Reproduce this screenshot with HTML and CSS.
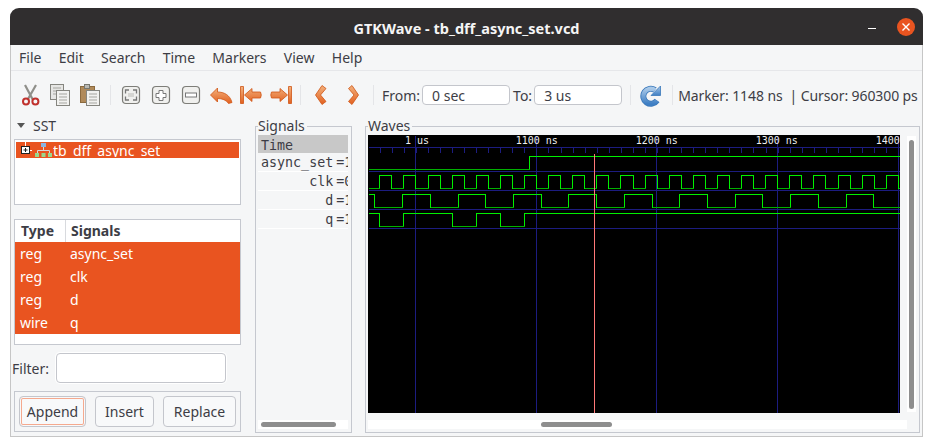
FILE: index.html
```html
<!DOCTYPE html>
<html lang="en">
<head>
<meta charset="UTF-8">
<meta name="viewport" content="width=device-width, initial-scale=1.0">
<title>GTKWave - tb_dff_async_set.vcd</title>
<link rel="stylesheet" href="styles.css">
</head>
<body>
<div class="window">
  <div class="titlebar">
    <span></span>
    <span class="title">GTKWave - tb_dff_async_set.vcd</span>
    <div class="controls">
      <span class="minimize"></span>
      <svg class="close" width="18" height="18" viewBox="0 0 18 18"><circle cx="9" cy="9" r="9" fill="#e95420"/><path d="M5.5 5.5l7 7M12.5 5.5l-7 7" stroke="#fff" stroke-width="1.4"/></svg>
    </div>
  </div>

  <div class="menubar">
    <span>File</span><span>Edit</span><span>Search</span><span>Time</span><span>Markers</span><span>View</span><span>Help</span>
  </div>

  <div class="toolbar">
    <svg class="tool" viewBox="0 0 30 24">
      <path d="M9 2l8 15M20 2l-8 14" stroke="#8f8f8a" stroke-width="2.2" fill="none"/>
      <circle cx="10" cy="18.6" r="3" fill="none" stroke="#c0322e" stroke-width="2"/>
      <circle cx="19.4" cy="18.6" r="3" fill="none" stroke="#c0322e" stroke-width="2"/>
    </svg>
    <svg class="tool" viewBox="0 0 30 24">
      <rect x="4.5" y="1.5" width="13" height="15" fill="#e6e6e4" stroke="#85857f"/>
      <path d="M7 5h8M7 8h8M7 11h3" stroke="#a5a5a0"/>
      <rect x="10.5" y="7.5" width="13" height="15" fill="#f2f2f0" stroke="#85857f"/>
      <path d="M13 11h8M13 14h8M13 17h8M13 20h8" stroke="#a5a5a0"/>
    </svg>
    <svg class="tool" viewBox="0 0 30 24">
      <rect x="4.5" y="3.5" width="14" height="16" fill="#b08a5a" stroke="#8b6a3f"/>
      <rect x="8.5" y="1.5" width="5" height="4" fill="#b9b9b4" stroke="#77776f"/>
      <rect x="10.5" y="7.5" width="13" height="15" fill="#f2f2f0" stroke="#85857f"/>
      <path d="M13 11h8M13 14h8M13 17h8M13 20h8" stroke="#a5a5a0"/>
    </svg>
    <span class="sep"></span>
    <svg class="tool" viewBox="0 0 30 24">
      <rect class="zoombox" x="6.5" y="3.5" width="17" height="17" rx="3.5"/>
      <path d="M13 7h-3.500v3.500M17 7h3.500v3.500M13 17h-3.500v-3.500M17 17h3.500v-3.500" fill="none" stroke="#777" stroke-width="1.300"/>
      <rect x="12" y="10" width="6" height="4" fill="#d5d5d2"/>
    </svg>
    <svg class="tool" viewBox="0 0 30 24">
      <rect class="zoombox" x="6.500" y="3.500" width="17" height="17" rx="3.500"/>
      <path d="M13 7.500h4v3h3v4h-3v3h-4v-3h-3v-4h3z" fill="#fff" stroke="#777"/>
    </svg>
    <svg class="tool" viewBox="0 0 30 24">
      <rect class="zoombox" x="6.500" y="3.500" width="17" height="17" rx="3.500"/>
      <rect x="9.500" y="10" width="11" height="4" fill="#fff" stroke="#777"/>
    </svg>
    <svg class="tool" viewBox="0 0 30 24">
      <defs>
        <linearGradient id="orange" x1="0" y1="0" x2="0" y2="1"><stop offset="0" stop-color="#f2b27e"/><stop offset="1" stop-color="#e2601f"/></linearGradient>
        <linearGradient id="blue" x1="0" y1="0" x2="0" y2="1"><stop offset="0" stop-color="#a8c8e8"/><stop offset="1" stop-color="#3f7fc4"/></linearGradient>
      </defs>
      <path class="arrow" d="M4.500 12L11.500 5V9C18 9 24 12 26 19.500L22.500 20.500C20.500 17 16 15.500 11.500 15.500V19Z"/>
    </svg>
    <svg class="tool" viewBox="0 0 30 24">
      <path class="arrow" d="M4.500 3.500H7.500V20.500H4.500ZM8.500 12L16 5.500V9H24.500Q26 12 24.500 15H16V18.500Z"/>
    </svg>
    <svg class="tool" viewBox="0 0 30 24">
      <path class="arrow" d="M25.500 3.500H22.500V20.500H25.500ZM21.500 12L14 5.500V9H5.500Q4 12 5.500 15H14V18.500Z"/>
    </svg>
    <span class="sep"></span>
    <svg class="tool" viewBox="0 0 30 24">
      <path class="arrow" d="M16 2.500L20 5.500L14.500 12L20 18.500L16 21.500L9.500 12Z"/>
    </svg>
    <svg class="tool" viewBox="0 0 30 24">
      <path class="arrow" d="M16 2.500L12.500 5.500L18 12L12.500 18.500L16 21.500L22.500 12Z"/>
    </svg>
    <span class="sep sep-time"></span>
    <label class="time-label">From:</label>
    <input class="time-input" type="text" value="0 sec">
    <label class="time-label to-label">To:</label>
    <input class="time-input" type="text" value="3 us">
    <span class="sep sep-reload"></span>
    <svg class="tool" viewBox="0 0 30 24">
      <path d="M21 17.500A7.500 7.500 0 1 1 19 7" fill="none" stroke="#3a78ba" stroke-width="6"/>
      <path d="M21 17.500A7.500 7.500 0 1 1 19 7" fill="none" stroke="url(#blue)" stroke-width="4.400"/>
      <path d="M24.500 3V12.500H15Z" fill="url(#blue)" stroke="#3a78ba" stroke-width=".8"/>
    </svg>
    <span class="sep sep-status"></span>
    <span class="status">Marker: 1148 ns&nbsp; | Cursor: 960300 ps</span>
  </div>

  <div class="main">
    <div class="left">
      <div class="sst-head"><span class="expander"></span>SST</div>
      <div class="tree">
        <div class="tree-row">
          <svg class="tree-icon" width="36" height="16" viewBox="0 0 36 16">
            <path d="M8.500 0v4M12 8.500h3" stroke="#fff"/>
            <rect x="4.500" y="4.500" width="8" height="7" fill="#fff" stroke="#222"/>
            <path d="M6.500 8h4M8.500 6v4" stroke="#222"/>
            <rect x="24" y="1" width="5" height="4" fill="#8ab4e0"/>
            <path d="M26.500 5v3M20.500 11V8.500H32.500V11" fill="none" stroke="#d8d8d8"/>
            <rect x="18" y="11" width="4" height="4" fill="#9ad88c"/>
            <rect x="24.500" y="11" width="4" height="4" fill="#9ad88c"/>
            <rect x="31" y="11" width="4" height="4" fill="#9ad88c"/>
          </svg>
          <span class="tree-label">tb_dff_async_set</span>
        </div>
      </div>
      <div class="signal-table">
        <div class="table-head"><span>Type</span><span class="head-signals">Signals</span></div>
        <div class="table-row"><span>reg</span><span>async_set</span></div>
        <div class="table-row"><span>reg</span><span>clk</span></div>
        <div class="table-row"><span>reg</span><span>d</span></div>
        <div class="table-row"><span>wire</span><span>q</span></div>
      </div>
      <div class="filter">
        <label>Filter:</label>
        <input type="text">
      </div>
      <div class="actions">
        <button class="btn btn-append">Append</button>
        <button class="btn btn-insert">Insert</button>
        <button class="btn btn-replace">Replace</button>
      </div>
    </div>

    <fieldset class="frame signals-frame">
      <legend>Signals</legend>
      <div class="signals-inner">
        <div class="signal-list">
          <div class="signal signal-time">Time</div>
          <div class="signal">async_set<span class="eq">=1</span></div>
          <div class="signal">      clk<span class="eq">=0</span></div>
          <div class="signal">        d<span class="eq">=1</span></div>
          <div class="signal">        q<span class="eq">=1</span></div>
        </div>
        <div class="hscroll"><div class="hthumb signals-thumb"></div></div>
      </div>
    </fieldset>

    <fieldset class="frame waves-frame">
      <legend>Waves</legend>
      <div class="waves-grid">
        <svg class="wave-canvas" width="532" height="278" viewBox="0 0 532 278">
          <g transform="translate(.5 .5)" shape-rendering="crispEdges">
            <path class="grid-line" d="M0 12H532M0 36H532M0 55H532M0 74H532M0 93H532"/>
            <path class="grid-line ticks" d="M11.100 14.500H532"/>
            <path class="grid-line" d="M47 0V278M168 0V278M288 0V278M409 0V278M530 0V278"/>

            <path class="wave" d="M0 34H161V21H532"/>
            <path class="wave-low" d="M0 34H161"/>

            <path class="wave" d="M0 53H11V40H23V53H35V40H47V53H60V40H72V53H84V40H96V53H108V40H120V53H132V40H144V53H156V40H168V53H180V40H192V53H204V40H216V53H228V40H240V53H252V40H265V53H277V40H289V53H301V40H313V53H325V40H337V53H349V40H361V53H373V40H385V53H397V40H409V53H421V40H433V53H445V40H457V53H470V40H482V53H494V40H506V53H518V40H530V53H532"/>
            <path class="wave-low" d="M0 53H11M23 53H35M47 53H60M72 53H84M96 53H108M120 53H132M144 53H156M168 53H180M192 53H204M216 53H228M240 53H252M265 53H277M289 53H301M313 53H325M337 53H349M361 53H373M385 53H397M409 53H421M433 53H445M457 53H470M482 53H494M506 53H518M530 53H532"/>

            <path class="wave" d="M0 59H6V72H34V59H62V72H90V59H117V72H145V59H173V72H200V59H228V72H256V59H284V72H311V59H339V72H367V59H394V72H422V59H450V72H478V59H505V72H532"/>
            <path class="wave-low" d="M6 72H34M62 72H90M117 72H145M173 72H200M228 72H256M284 72H311M339 72H367M394 72H422M450 72H478M505 72H532"/>

            <path class="wave" d="M0 78H11V91H35V78H84V91H108V78H132V91H156V78H532"/>
            <path class="wave-low" d="M11 91H35M84 91H108M132 91H156"/>

            <path class="marker" d="M226 18V278"/>
          </g>
          <text class="ruler-text" x="37" y="9">1 us</text>
          <text class="ruler-text" x="147.700" y="9">1100 ns</text>
          <text class="ruler-text" x="267.700" y="9">1200 ns</text>
          <text class="ruler-text" x="387.700" y="9">1300 ns</text>
          <text class="ruler-text" x="507.700" y="9">1400 ns</text>
        </svg>
        <div class="vscroll"><div class="vthumb"></div></div>
        <div class="hscroll waves-hscroll"><div class="hthumb waves-thumb"></div></div>
      </div>
    </fieldset>
  </div>
</div>
</body>
</html>
```
FILE: styles.css
```css
* {
  box-sizing: border-box;
}
body {
  margin: 0;
  padding: 8px 0 0 10px;
  background-color: #fff;
  font-family: "Noto Sans", sans-serif;
  font-size: 14px;
  color: #3d3d45;
  overflow: hidden;
}
.window {
  width: 913px;
  height: 429px;
  display: flex;
  flex-direction: column;
  background-color: #f5f6f7;
  border: 1px solid #c6c6c6;
  border-top: 0;
  border-radius: 9px 9px 0 0;
}
.titlebar {
  height: 37px;
  margin: 0 -1px;
  padding: 0 8px;
  flex: none;
  display: grid;
  grid-template-columns: 1fr auto 1fr;
  align-items: center;
  background-color: #302e2f;
  border-radius: 9px 9px 0 0;
}
.title {
  color: #f5f5f5;
  font-weight: 700;
  font-size: 14.500px;
  position: relative;
  top: 1px;
}
.controls {
  display: flex;
  justify-content: flex-end;
  align-items: center;
  gap: 21px;
}
.minimize {
  width: 8px;
  height: 1px;
  margin-top: 3px;
  background-color: #fff;
}
.close {
  display: block;
}
.menubar {
  height: 26px;
  flex: none;
  display: flex;
  align-items: center;
  padding-left: 8px;
  gap: 17.300px;
  border-bottom: 1px solid #e6e7ea;
}
.toolbar {
  height: 44px;
  flex: none;
  display: flex;
  align-items: center;
  padding: 4px 0 0 5px;
}
.tool {
  width: 30px;
  height: 24px;
  flex: none;
}
.zoombox {
  fill: #f0f0ee;
  stroke: #7d7d78;
  stroke-width: 1.200;
}
.arrow {
  fill: url(#orange);
  stroke: #cf5414;
  stroke-width: .8;
  stroke-linejoin: round;
}
.sep {
  width: 1px;
  height: 20px;
  flex: none;
  margin: 0 5px 0 4px;
  background-color: #e4e5e8;
}
.sep-time {
  margin: 0 8px 0 7px;
}
.sep-reload {
  margin: 0 5px 0 8px;
}
.sep-status {
  margin: 0 5px 0 6px;
}
.time-label {
  margin-right: 2px;
}
.to-label {
  margin: 0 2px 0 3px;
}
.time-input {
  width: 88px;
  height: 20px;
  padding: 0 0 0 9px;
  background-color: #fff;
  border: 1px solid #c4c6cc;
  border-radius: 4px;
  font: inherit;
  color: inherit;
}
.status {
  white-space: nowrap;
  letter-spacing: -.1px;
}
.main {
  flex: 1;
  min-height: 0;
  display: flex;
}
.left {
  width: 229px;
  margin-left: 1px;
  flex: none;
}
.sst-head {
  height: 24px;
  display: flex;
  align-items: center;
  padding: 0 0 3px 5px;
}
.expander {
  width: 0;
  height: 0;
  margin-right: 8px;
  border-left: 4px solid transparent;
  border-right: 4px solid transparent;
  border-top: 5px solid #555;
}
.tree {
  width: 227px;
  height: 66px;
  margin-left: 2px;
  padding: 2px 1px;
  background-color: #fff;
  border: 1px solid #c5c8cf;
}
.tree-row {
  height: 16px;
  padding-left: 1px;
  display: flex;
  color: #fff;
  background-color: #e95420;
  line-height: 18px;
}
.tree-icon {
  flex: none;
}
.tree-label {
  height: 15px;
  overflow: hidden;
}
.signal-table {
  width: 227px;
  height: 126px;
  margin: 14px 0 0 2px;
  background-color: #fff;
  border: 1px solid #c5c8cf;
}
.table-head,
.table-row {
  display: grid;
  grid-template-columns: 50px 1fr;
  align-items: center;
}
.table-head {
  height: 22px;
  font-weight: 700;
}
.table-head span {
  height: 100%;
  padding-left: 6px;
  line-height: 22px;
}
.table-head .head-signals {
  padding-left: 5px;
  border-left: 1px solid #d8dade;
}
.table-row {
  height: 23px;
  color: #fff;
  background-color: #e95420;
}
.table-row span {
  padding-left: 5px;
}
.filter {
  height: 30px;
  margin-top: 8px;
  display: flex;
  align-items: center;
}
.filter label {
  width: 44px;
  flex: none;
}
.filter input {
  width: 170px;
  height: 30px;
  background-color: #fff;
  border: 1px solid #c4c6cc;
  border-radius: 4px;
  box-shadow: 0 0 0 1px #fff;
}
.actions {
  width: 227px;
  height: 41px;
  margin: 8px 0 0 2px;
  padding: 4px;
  display: flex;
  gap: 9px;
  border: 1px solid #c5c8cf;
}
.btn {
  height: 31px;
  padding: 0;
  background-color: #f8f9fa;
  border: 1px solid #c4c6cc;
  border-radius: 4px;
  font: inherit;
  color: inherit;
}
.btn-append {
  width: 67px;
  box-shadow: inset 0 0 0 1px #f8f9fa, inset 0 0 0 2px #f5a98e;
}
.btn-insert {
  width: 59px;
}
.btn-replace {
  width: 73px;
}
.frame {
  min-width: 0;
  height: 315px;
  margin: 3px 0 0 0;
  padding: 1px 3px 3px 2px;
  border: 1px solid #c5c8cf;
}
.frame legend {
  height: 16px;
  margin-left: 0;
  padding: 0 2px 0 0;
  line-height: 15px;
}
.signals-frame {
  width: 97px;
  margin-left: 14px;
  flex: none;
}
.waves-frame {
  width: 555px;
  margin-left: 13px;
  flex: none;
}
.signals-inner {
  height: 100%;
  display: flex;
  flex-direction: column;
  justify-content: space-between;
}
.signal-list {
  font-family: "DejaVu Sans Mono", monospace;
  font-size: 13.330px;
}
.signal {
  height: 19px;
  padding-left: 3px;
  border-bottom: 1px solid #fff;
  white-space: pre;
  overflow: hidden;
  line-height: 20px;
}
.signal-time {
  height: 18px;
  line-height: 21px;
  background-color: #c8c8c8;
  border-bottom: 0;
}
.eq {
  margin-left: 3px;
}
.hscroll {
  height: 9px;
  padding: 2px 3px;
  background-color: #fff;
}
.hthumb {
  height: 5px;
  background-color: #8e8e8e;
  border-radius: 3px;
}
.signals-thumb {
  width: 75px;
}
.waves-grid {
  display: grid;
  grid-template-columns: 539px 9px;
  grid-template-rows: 278px 9px;
  row-gap: 7px;
}
.wave-canvas {
  display: block;
  background-color: #000;
}
.vscroll {
  height: 276px;
  margin-top: 1px;
  padding: 4px 2px 3px;
  background-color: #fff;
}
.vthumb {
  width: 5px;
  height: 100%;
  background-color: #8e8e8e;
  border-radius: 3px;
}
.waves-thumb {
  width: 71px;
  margin-left: 170px;
}
.grid-line {
  stroke: #1c1c80;
  fill: none;
}
.ticks {
  stroke-width: 5;
  stroke-dasharray: 1 11.060;
}
.wave {
  stroke: #00f000;
  fill: none;
}
.wave-low {
  stroke: #00b000;
  fill: none;
}
.marker {
  stroke: #ff7878;
  fill: none;
}
.ruler-text {
  fill: #f0f0f0;
  font-family: "DejaVu Sans Mono", monospace;
  font-size: 10px;
}
```
